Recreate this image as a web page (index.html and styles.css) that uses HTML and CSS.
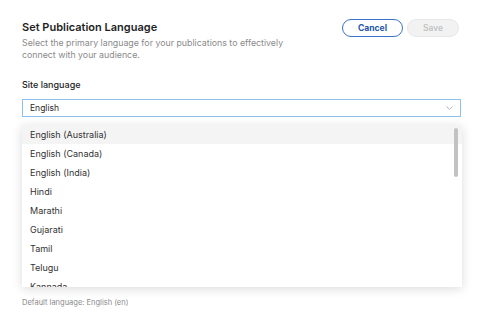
FILE: index.html
```html
<!DOCTYPE html>
<html>
<head>
<meta charset="utf-8">
<link rel="stylesheet" href="styles.css">
</head>
<body>
<div class="panel">
  <div class="header">
    <div class="intro">
      <h1 class="title">Set Publication Language</h1>
      <p class="desc">Select the primary language for your publications to effectively connect with your audience.</p>
    </div>
    <div class="actions">
      <button class="btn btn-cancel">Cancel</button>
      <button class="btn btn-save">Save</button>
    </div>
  </div>
  <div class="field">
    <div class="label">Site language</div>
    <div class="select-wrap">
      <div class="select">
        <span>English</span>
        <svg class="chev" width="7" height="4" viewBox="0 0 7 4"><path d="M0.5 0.5 L3.5 3.3 L6.5 0.5" fill="none" stroke="#b5b5b5" stroke-width="1"/></svg>
      </div>
      <div class="menu">
        <ul class="options">
          <li class="opt active">English (Australia)</li>
          <li class="opt">English (Canada)</li>
          <li class="opt">English (India)</li>
          <li class="opt">Hindi</li>
          <li class="opt">Marathi</li>
          <li class="opt">Gujarati</li>
          <li class="opt">Tamil</li>
          <li class="opt">Telugu</li>
          <li class="opt">Kannada</li>
        </ul>
        <div class="scrollbar"></div>
      </div>
    </div>
    <div class="hint">Default language: English (en)</div>
  </div>
</div>
</body>
</html>
```
FILE: styles.css
```css
* { box-sizing: border-box; }
html, body { margin: 0; padding: 0; background: #fff; }
body {
  font-family: Inter, "Open Sans", "Liberation Sans", sans-serif;
  color: #222;
  width: 488px;
  height: 326px;
  overflow: hidden;
}
.panel {
  padding: 19px 29px 0 22px;
}
.header {
  display: flex;
  justify-content: space-between;
  align-items: flex-start;
}
.title {
  margin: 1px 0 0;
  font-size: 11px;
  font-weight: 600;
  color: #1f1f1f;
  line-height: 14px;
}
.desc {
  margin: 3px 0 0;
  width: 270px;
  font-size: 8.8px;
  line-height: 12px;
  color: #8a8a8a;
}
.actions {
  display: flex;
  gap: 4px;
}
.btn {
  height: 18px;
  border-radius: 9px;
  font-family: inherit;
  font-size: 8.5px;
  font-weight: 600;
  padding: 0;
  line-height: 16px;
}
.btn-cancel {
  width: 61px;
  background: #fff;
  border: 1px solid #3a72c9;
  color: #2456a8;
  font-weight: 700;
}
.btn-save {
  width: 52px;
  background: #f2f2f2;
  border: 1px solid #e8e8e8;
  color: #bdbdbd;
  font-weight: 500;
}
.field {
  margin-top: 18px;
}
.label {
  font-size: 9px;
  font-weight: 500;
  color: #222;
  line-height: 12px;
}
.select-wrap {
  position: relative;
  margin-top: 8px;
  width: 439px;
}
.select {
  height: 18px;
  border: 1px solid #8cc0ec;
  display: flex;
  align-items: center;
  justify-content: space-between;
  padding: 0 7px 0 7px;
  font-size: 8.5px;
  color: #2a2a2a;
}
.chev { display: block; }
.menu {
  position: absolute;
  left: 0;
  top: 26px;
  width: 440px;
  height: 162px;
  background: #fff;
  box-shadow: 0 2px 10px rgba(0,0,0,0.14);
  overflow: hidden;
  z-index: 2;
}
.options {
  list-style: none;
  margin: 0;
  padding: 0;
}
.opt {
  height: 19px;
  line-height: 19px;
  padding-left: 8px;
  font-size: 9px;
  color: #333;
}
.opt.active { background: #f4f4f4; }
.scrollbar {
  position: absolute;
  right: 4px;
  top: 3px;
  width: 4px;
  height: 49px;
  border-radius: 2px;
  background: #c2c2c2;
}
.hint {
  margin-top: 181px;
  font-size: 7.5px;
  color: #8a8a8a;
}
```
